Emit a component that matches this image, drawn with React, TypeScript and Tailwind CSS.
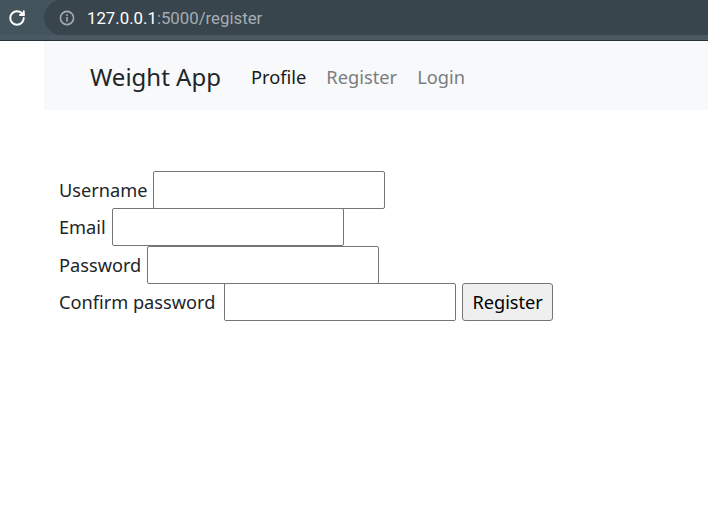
import React from "react";
import { RotateCw } from "lucide-react";

export default function App() {
  return (
    <div className="w-[708px] h-[505px] bg-white overflow-hidden relative" style={{ fontFamily: '"Noto Sans", sans-serif' }}>
      {/* Browser chrome */}
      <div className="h-[41px] bg-[#44545c] flex flex-col">
        <div className="h-[35px] flex items-center">
          <div className="w-[44px] h-full flex items-center justify-center">
            <RotateCw size={18} strokeWidth={2.6} color="#ffffff" className="-ml-[10px]" />
          </div>
          <div className="flex-1 h-[35px] bg-[#38454d] rounded-l-full flex items-center pl-[15px]">
            <svg width="16" height="16" viewBox="0 0 16 16" className="mr-[12px]">
              <circle cx="8" cy="8" r="6.6" fill="none" stroke="#a6adb2" strokeWidth="1.6" />
              <rect x="7.2" y="7" width="1.6" height="4.6" fill="#a6adb2" />
              <rect x="7.2" y="4.3" width="1.6" height="1.6" fill="#a6adb2" />
            </svg>
            <span className="text-[16.8px] leading-none text-white mt-[1px]" style={{ fontFamily: 'Roboto, sans-serif' }}>
              127.0.0.1<span className="text-[#a6adb2]">:5000/register</span>
            </span>
          </div>
        </div>
        <div className="h-[5px] bg-[#4a5961]" />
        <div className="h-[1px] bg-[#263238]" />
      </div>

      {/* Navbar */}
      <div className="pl-[44px]">
        <nav className="h-[69px] bg-[#f8f9fa] flex items-center pl-[46px] pt-[2px]">
          <span className="text-[24px] text-[#212529] mr-[20px]">Weight App</span>
          <span className="text-[18.3px] text-[#1a1a1a] px-[10px]">Profile</span>
          <span className="text-[18.3px] text-[#7b7d7f] px-[10px]">Register</span>
          <span className="text-[18.3px] text-[#7b7d7f] px-[10px]">Login</span>
        </nav>
      </div>

      {/* Form */}
      <form className="mt-[61px] pl-[59px] flex flex-col text-[18.2px] text-[#212529]">
        <div className="flex items-center gap-[6px] h-[37.5px] pt-[1px]">
          <label>Username</label>
          <input className="w-[232px] h-[38px] border border-[#767676] rounded-[2px] bg-white -mt-[1px]" />
        </div>
        <div className="flex items-center gap-[6px] h-[37.5px] pt-[1px]">
          <label>Email</label>
          <input className="w-[232px] h-[38px] border border-[#767676] rounded-[2px] bg-white -mt-[1px]" />
        </div>
        <div className="flex items-center gap-[6px] h-[37.5px] pt-[1px]">
          <label>Password</label>
          <input className="w-[232px] h-[38px] border border-[#767676] rounded-[2px] bg-white -mt-[1px]" />
        </div>
        <div className="flex items-center gap-[6px] h-[37.5px] pt-[1px]">
          <label className="mr-[3px]">Confirm password</label>
          <input className="w-[232px] h-[38px] border border-[#767676] rounded-[2px] bg-white -mt-[1px]" />
          <button type="button" className="h-[38px] -mt-[1px] px-[9px] border border-[#767676] rounded-[3px] bg-[#efefef] text-[18.2px] text-black">
            Register
          </button>
        </div>
      </form>
    </div>
  );
}
